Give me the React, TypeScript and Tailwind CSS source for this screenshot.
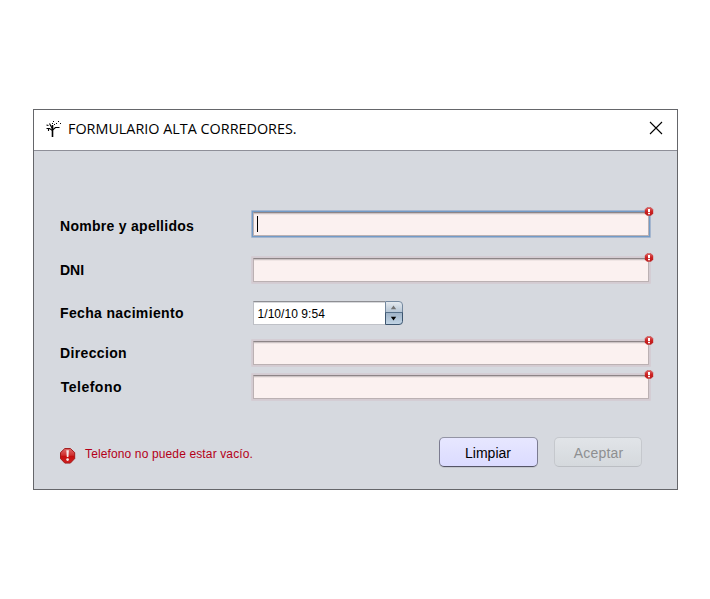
import type { ReactNode } from 'react';

const sans = "font-['Liberation_Sans',Arial,sans-serif]";

function ErrorBadge() {
  return (
    <svg className="absolute -top-[3px] -right-[3px]" width="10" height="9" viewBox="0 0 10 9">
      <defs>
        <linearGradient id="badge" x1="0" y1="0" x2="0" y2="1">
          <stop offset="0" stopColor="#dc6666" />
          <stop offset="0.5" stopColor="#cd2020" />
          <stop offset="1" stopColor="#ba1a1a" />
        </linearGradient>
      </defs>
      <path d="M3 0.6h4l2 2v4l-2 2h-4l-2-2v-4z" fill="url(#badge)" stroke="#c03030" strokeWidth="0.4" />
      <path d="M4 2h2v3.2h-2zM4 6h2v1.3h-2z" fill="#fff" />
    </svg>
  );
}

function ErrorIcon() {
  return (
    <svg width="16" height="16" viewBox="0 0 16 16">
      <defs>
        <linearGradient id="stop" x1="0" y1="0" x2="0" y2="1">
          <stop offset="0" stopColor="#e06a6a" />
          <stop offset="0.45" stopColor="#cf3030" />
          <stop offset="0.55" stopColor="#c60f0f" />
          <stop offset="1" stopColor="#cf2222" />
        </linearGradient>
      </defs>
      <path d="M4.8 0.5h5.6l4.3 4.1v6l-4.3 4.5h-5.6l-4.3-4.5v-6z" fill="url(#stop)" stroke="#9b1111" strokeWidth="0.9" />
      <path d="M6.3 2.2h2.6l-0.5 6.9h-1.6z" fill="#f6e9e9" />
      <circle cx="7.6" cy="11.6" r="1.35" fill="#f6e9e9" />
    </svg>
  );
}

function TreeIcon() {
  return (
    <svg className="mt-[-2px]" width="16" height="18" viewBox="0 0 16 18" fill="none" stroke="#000">
      <path d="M7.5 17V5" strokeWidth="1.6" />
      <path d="M7.5 9L4.5 3.5M1.5 5l2 .5M1.5 8.5h3l3 2M3.5 11v-2M7.5 10l3-2.5h4" strokeWidth="1.1" />
      <path d="M8 1h1v1h-1zM7 3h1v1h-1zM9 4h1v1h-1zM13 1h1v1h-1zM11 3h1v1h-1zM15 3h1v1h-1z" fill="#000" stroke="none" />
    </svg>
  );
}

function Field({ focused = false }: { focused?: boolean }) {
  return (
    <div className={`relative h-7 w-[400px] rounded-[1px] p-px ${focused ? 'bg-[#a5b6cf]' : 'bg-[#d4cdd4]'}`}>
      <div className={`h-full p-px ${focused ? 'bg-[#729bc7]' : 'bg-[#d4cbd1]'}`}>
        <div className="h-full border border-t-[#8d8587] border-x-[#bbb1b3] border-b-[#bbb1b3] bg-[#fbf1f0] pt-px shadow-[inset_0_1px_0_#cdc4c5,inset_0_2px_0_#efe5e4]">
          {focused && <div className="mt-[2px] ml-[3px] h-4 w-px bg-black" />}
        </div>
      </div>
      <ErrorBadge />
    </div>
  );
}

function Row({ label, className, tracking, labelClass = '', children }: {
  label: string; className: string; tracking: string; labelClass?: string; children: ReactNode;
}) {
  return (
    <div className={`flex h-7 items-center ${className}`}>
      <span className={`w-[191px] shrink-0 text-[14px] leading-4 font-bold whitespace-nowrap ${tracking} ${labelClass}`}>{label}</span>
      {children}
    </div>
  );
}

function DateSpinner() {
  return (
    <div className="ml-[2px] flex h-6 w-[150px]">
      <div className="flex h-6 w-[132px] items-center border border-r-0 border-t-[#8d8e93] border-l-[#bcbec4] border-b-[#c0c2c8] bg-white pt-px pl-[3.5px] text-[12px] tracking-[0.06px] shadow-[inset_0_1px_0_#d8d9dc]">
        1/10/10 9:54
      </div>
      <svg width="18" height="25" viewBox="0 0 18 25">
        <defs>
          <linearGradient id="up" x1="0" y1="0" x2="0" y2="1">
            <stop offset="0" stopColor="#e6ebf0" />
            <stop offset="1" stopColor="#b5c5d5" />
          </linearGradient>
          <linearGradient id="down" x1="0" y1="0" x2="0" y2="1">
            <stop offset="0" stopColor="#9fb3c7" />
            <stop offset="1" stopColor="#c2d5e6" />
          </linearGradient>
        </defs>
        <path d="M0.5 11.5v-11h13.5q3.5 0 3.5 3.5v7.5z" fill="url(#up)" stroke="#75899f" />
        <path d="M0.5 11.5h17v9q0 3-3.5 3h-13.5z" fill="url(#down)" stroke="#3c556f" />
        <path d="M1 11.5h16" stroke="#56708a" />
        <path d="M8.5 4.5l2.7 3.7h-5.4z" fill="#737373" />
        <path d="M8.5 19.5l2.7-3.7h-5.4z" fill="#000" />
      </svg>
    </div>
  );
}

export default function App() {
  return (
    <main className={`h-[599px] w-[710px] bg-white pt-[109px] pl-[33px] text-black ${sans}`}>
      <section className="flex h-[381px] w-[645px] flex-col border border-[#65666a] bg-[#d6d9df]">
        <header className="flex h-[41px] shrink-0 items-center border-b border-[#8e8f98] bg-white pr-[14px] pl-[11px]">
          <TreeIcon />
          <h1 className="mt-[-4px] ml-[7px] flex-1 origin-left scale-x-[0.958] font-['Open_Sans','Noto_Sans',sans-serif] text-[15px] leading-5 font-normal whitespace-nowrap">
            FORMULARIO ALTA CORREDORES.
          </h1>
          <svg className="mt-[-5px]" width="14" height="14" viewBox="0 0 14 14" stroke="#000" strokeWidth="1.1">
            <path d="M1 1l12 12M13 1L1 13" />
          </svg>
        </header>

        <div className="pt-[59px] pl-[26px]">
          <Row label="Nombre y apellidos" className="" tracking="tracking-[0.28px]" labelClass="pt-1"><Field focused /></Row>
          <Row label="DNI" className="mt-[18px]" tracking="">
            <Field />
          </Row>
          <Row label="Fecha nacimiento" className="mt-[15px]" tracking="tracking-[0.35px]"><DateSpinner /></Row>
          <Row label="Direccion" className="mt-[12px]" tracking="tracking-[0.35px]"><Field /></Row>
          <Row label="Telefono" className="mt-[6px]" tracking="tracking-[0.5px]" labelClass="pl-[0.7px]"><Field /></Row>
        </div>

        <footer className="mt-[36px] flex h-[30px] pr-[35px] pl-[26px]">
          <div className="flex flex-1 items-start pt-[11px]">
            <ErrorIcon />
            <span className="mt-[-2px] ml-[9px] text-[12px] leading-4 tracking-[0.13px] whitespace-nowrap text-[#b40018]">Telefono no puede estar vacío.</span>
          </div>
          <button className="h-[30px] w-[99px] rounded-[5px] border border-[#7b7b90] border-t-[#9394a4] border-b-[#555566] bg-linear-to-b from-[#e7e7ff] to-[#dbdbff] pt-[2px] pr-px text-[14px] shadow-[0_1px_0_#c3c6cc]">
            Limpiar
          </button>
          <button disabled className="ml-4 h-[30px] w-[88px] rounded-[5px] border border-[#c5c8cd] border-b-[#bbbec3] bg-linear-to-b from-[#e1e4e8] to-[#d5d9dd] pt-[2px] pl-px text-[14px] tracking-[0.2px] text-[#8e8f91]">
            Aceptar
          </button>
        </footer>
      </section>
    </main>
  );
}
